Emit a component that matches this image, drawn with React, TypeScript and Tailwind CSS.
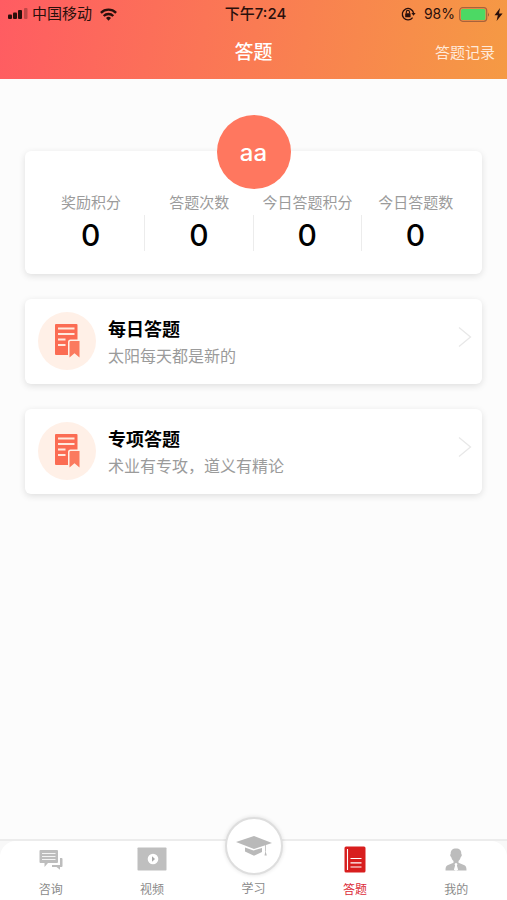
import type { ReactNode } from 'react';

const stats = [
  { label: '奖励积分', value: 0 },
  { label: '答题次数', value: 0 },
  { label: '今日答题积分', value: 0 },
  { label: '今日答题数', value: 0 },
];

const quizzes = [
  { title: '每日答题', desc: '太阳每天都是新的' },
  { title: '专项答题', desc: '术业有专攻，道义有精论' },
];

function StatusBar() {
  return (
    <div className="grid grid-cols-[1fr_auto_1fr] items-center h-7 pl-2 pr-1 text-[15px] leading-5 text-[#2a100c]">
      <div className="flex items-center">
        <svg width="20" height="12" viewBox="0 0 20 12" fill="currentColor">
          <rect x="0" y="6.5" width="4" height="4.5" rx="1" />
          <rect x="5" y="4.5" width="4" height="6.5" rx="1" />
          <rect x="10" y="2" width="4" height="9" rx="1" />
          <rect x="16" y="0" width="3.5" height="11" rx="1" opacity="0.3" />
        </svg>
        <span className="ml-1">中国移动</span>
        <svg className="ml-2" width="17" height="13" viewBox="0 0 17 13" fill="none" stroke="currentColor" strokeWidth="2.4">
          <path d="M0.9 4.8a10.8 10.8 0 0 1 15.2 0" />
          <path d="M3.7 8a6.8 6.8 0 0 1 9.6 0" />
          <path d="M8.5 12.8l-2.5-2.8a3.6 3.6 0 0 1 5 0z" fill="currentColor" stroke="none" />
        </svg>
      </div>
      <span className="text-[15px] font-medium">下午7:24</span>
      <div className="flex items-center justify-end">
        <svg width="15" height="14" viewBox="0 0 15 14" fill="none" stroke="currentColor">
          <path d="M11.6 10.6A5.7 5.7 0 1 1 12.6 6" strokeWidth="1.3" />
          <path d="M10.4 6h4.2l-2.1 2.8z" fill="currentColor" stroke="none" />
          <rect x="4.2" y="6.3" width="5.4" height="4" rx="0.6" fill="currentColor" stroke="none" />
          <path d="M5.3 6.5V5a1.6 1.6 0 0 1 3.2 0v1.5" strokeWidth="1.1" />
        </svg>
        <span className="ml-2 text-[14px]">98%</span>
        <svg className="ml-1" width="31" height="15" viewBox="0 0 31 15">
          <rect x="0.7" y="0.7" width="27" height="13.6" rx="3" fill="none" stroke="#a8623c" strokeWidth="1.2" />
          <rect x="2" y="2" width="24.4" height="11" rx="1.5" fill="#4cd964" />
          <path d="M29 5.2q1.6 2.3 0 4.6z" fill="#8c5334" />
        </svg>
        <svg className="ml-1" width="9" height="13" viewBox="0 0 9 13" fill="currentColor">
          <path d="M6 0L0.5 7.2h3.3L2.6 13l6-7.6H5z" />
        </svg>
      </div>
    </div>
  );
}

function QuizIcon() {
  return (
    <svg width="26" height="34" viewBox="0 0 26 34">
      <path d="M2 0h20.5a1 1 0 0 1 1 1v14.5h-7q-2.5 0-2.5 2.5V31H2a1 1 0 0 1-1-1V1a1 1 0 0 1 1-1z" fill="#fb6c53" />
      <path d="M4 4.5h16.5M4 10h16.5M4 15.5h7.5M4 21h7.5" stroke="#ffe9dd" strokeWidth="1.8" />
      <path d="M15.5 18.2a1.2 1.2 0 0 1 1.2-1.2H25.5V33.500l-5-4.3-5 4.3z" fill="#fb7a5f" />
    </svg>
  );
}

function QuizCard({ title, desc }: { title: string; desc: string }) {
  return (
    <button className="flex items-center w-full h-[85px] pl-[13px] pr-2.5 pb-0.5 rounded-md bg-white text-left shadow-[0_2px_7px_rgba(0,0,0,0.12)]">
      <span className="flex items-center justify-center w-[58px] h-[58px] rounded-full bg-[#fff0e7]">
        <QuizIcon />
      </span>
      <span className="flex-1 flex flex-col ml-3 pt-0.5">
        <span className="text-[18px] leading-7 font-bold text-black">{title}</span>
        <span className="text-[16px] leading-6 text-[#9b9b9b]">{desc}</span>
      </span>
      <svg className="mb-2" width="14" height="22" viewBox="0 0 14 22" fill="none" stroke="#e8e8e8" strokeWidth="1.3">
        <path d="M1 1.5l11.5 9.5L1 20.5" />
      </svg>
    </button>
  );
}

function ChatIcon() {
  return (
    <svg width="24" height="21" viewBox="0 0 24 21" fill="#bdbdbd">
      <path d="M1.5 1h16.5a1 1 0 0 1 1 1v11a1 1 0 0 1-1 1H9l-3.5 4v-4h-4a1 1 0 0 1-1-1V2a1 1 0 0 1 1-1z" />
      <path d="M3 4.5h13.5M3 7.5h13.5M3 10.5h13.5" stroke="#f4f4f4" strokeWidth="1" />
      <path d="M21 9h1.5a1 1 0 0 1 1 1v7a1 1 0 0 1-1 1h-1.5v2.8L17.5 18H13v-2h8z" />
    </svg>
  );
}

function VideoIcon() {
  return (
    <svg width="30" height="24" viewBox="0 0 30 24">
      <rect x="0.5" y="0.5" width="29" height="23" rx="0.8" fill="#bfbfbf" />
      <circle cx="16" cy="12" r="5.3" fill="#fff" />
      <path d="M15 9.2l3 2.8-3 2.8z" fill="#a8a8a8" />
    </svg>
  );
}

function BookIcon() {
  return (
    <svg width="22" height="27" viewBox="0 0 22 27">
      <rect x="0.5" y="0.5" width="21" height="26" rx="1.5" fill="#d81e1e" />
      <path d="M3.5 3v21" stroke="#fff" strokeWidth="1.1" />
      <path d="M6.5 12.5h11M6.5 16.8h11M6.5 21h11" stroke="#fff" strokeWidth="1.2" />
    </svg>
  );
}

function PersonIcon() {
  return (
    <svg width="22" height="23" viewBox="0 0 22 23" fill="#bcbcbc">
      <path d="M11 0.5c3.6 0 5.6 2 5.3 5.5.8.2.7 2.5-.5 3-.5 2-1.3 3-2.300 4v1.8l6 2.5c1.5.7 2 2 2 5.2H.5c0-3.2.5-4.5 2-5.2l6-2.5V13c-1-1-1.8-2-2.3-4-1.2-.5-1.3-2.8-.5-3C5.4 2.5 7.4.5 11 .5z" />
      <path d="M11 14.8l1.5 1.3-.6 1.4 1.2 4.2L11 23l-2.1-1.3 1.2-4.2-.6-1.4z" fill="#fff" />
    </svg>
  );
}

function CapIcon() {
  return (
    <svg width="36" height="22" viewBox="0 0 36 22" fill="#b9b9b9">
      <path d="M18 1L36 8 18 14 0 7z" />
      <path d="M9 12.5l8.5 3 8.5-2.5v4L18 20.8 9 16.5z" />
      <path d="M29.5 10v6.5" stroke="#b9b9b9" strokeWidth="0.8" />
      <path d="M29.5 16l1.3 4.5h-2.3z" />
    </svg>
  );
}

function Tab({ label, active, children }: { label: string; active?: boolean; children: ReactNode }) {
  return (
    <a href="#" className="flex-1 flex flex-col items-center" aria-current={active ? 'page' : undefined}>
      <span className="flex items-center justify-center h-[38px]">{children}</span>
      <span className={`mt-[3px] text-[12px] leading-5 ${active ? 'text-[#dc2b38]' : 'text-[#8a8a8a]'}`}>{label}</span>
    </a>
  );
}

export default function App() {
  return (
    <div className="flex flex-col min-h-screen bg-[#fcfcfc] font-[Inter,'Noto_Sans_CJK_SC',sans-serif]">
      <header className="bg-linear-[100deg,#ff5c62,#f59a44]">
        <StatusBar />
        <div className="grid grid-cols-[1fr_auto_1fr] items-center h-[51px] px-3 pb-0.5 text-white">
          <span />
          <h1 className="text-[19px] leading-7 font-medium">答题</h1>
          <button className="justify-self-end text-[15px] leading-6 text-[#ffe9d9]">答题记录</button>
        </div>
      </header>

      <main className="flex flex-col gap-[25px] px-[25px] pt-[72px] pb-6">
        <section className="flex flex-col items-center h-[123px] rounded-md bg-white shadow-[0_2px_7px_rgba(0,0,0,0.12)]">
          <div className="flex items-center justify-center shrink-0 w-[74px] h-[74px] -mt-9 pt-0.5 rounded-full bg-[#ff775f] text-[24px] font-medium text-white">
            aa
          </div>
          <dl className="grid grid-cols-4 w-full px-3 pt-0.5 text-center">
            {stats.map((stat) => (
              <div key={stat.label} className="group">
                <dt className="text-[15px] leading-6 whitespace-nowrap text-[#9b9b9b]">{stat.label}</dt>
                <dd className="h-9 text-[30px] leading-10 font-medium text-black border-r border-[#ececec] group-last:border-transparent">
                  {stat.value}
                </dd>
              </div>
            ))}
          </dl>
        </section>

        {quizzes.map((quiz) => (
          <QuizCard key={quiz.title} title={quiz.title} desc={quiz.desc} />
        ))}
      </main>

      <nav className="mt-auto border-t-2 border-[#ececec] bg-[#f8f8f8]">
        <div className="flex h-[59px] rounded-t-2xl bg-white">
          <Tab label="咨询">
            <ChatIcon />
          </Tab>
          <Tab label="视频">
            <VideoIcon />
          </Tab>
          <a href="#" className="flex-1 flex flex-col items-center">
            <span className="flex items-center justify-center shrink-0 w-[58px] h-[58px] -mt-6 rounded-full border-2 border-[#dedede] bg-white shadow-[0_0_4px_rgba(0,0,0,0.12)]">
              <CapIcon />
            </span>
            <span className="mt-1 text-[12px] leading-5 text-[#8a8a8a]">学习</span>
          </a>
          <Tab label="答题" active>
            <BookIcon />
          </Tab>
          <Tab label="我的">
            <PersonIcon />
          </Tab>
        </div>
      </nav>
    </div>
  );
}
